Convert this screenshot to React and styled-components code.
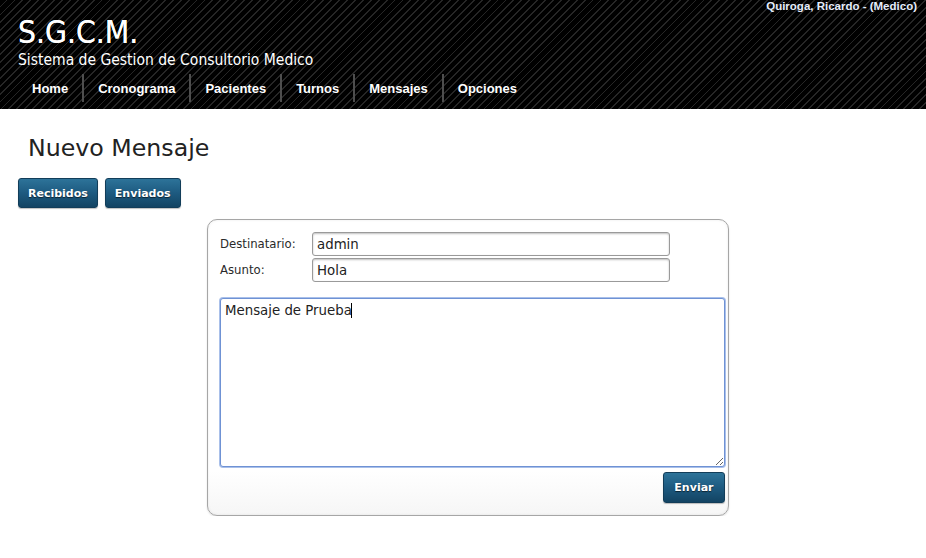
import React from "react";
import styled, { createGlobalStyle } from "styled-components";

const Global = createGlobalStyle`
  html, body { margin: 0; padding: 0; background: #fff; }
  body { font-family: "DejaVu Sans Condensed", "DejaVu Sans", sans-serif; color: #222; }
  * { box-sizing: border-box; }
`;

const Header = styled.header`
  height: 109px;
  background-color: #000;
  background-image: repeating-linear-gradient(
    135deg,
    #000 0px,
    #000 4.3px,
    #262626 4.3px,
    #262626 5.6px
  );
  display: flex;
  flex-direction: column;
  color: #fff;
`;

const UserBar = styled.div`
  height: 12px;
  line-height: 12px;
  text-align: right;
  padding-right: 9px;
  font-family: "Liberation Sans", Arial, sans-serif;
  font-weight: bold;
  font-size: 11.5px;
  color: #e4ecfb;
`;

const Brand = styled.div`
  padding: 2px 0 0 18px;
  display: flex;
  flex-direction: column;
`;

const Title = styled.h1`
  margin: 0;
  font-family: "DejaVu Sans Condensed", "DejaVu Sans", sans-serif;
  font-weight: normal;
  font-size: 31.5px;
  line-height: 36px;
  color: #fff;
  text-shadow: 0 0 0.6px #fff;
`;

const Subtitle = styled.div`
  font-family: "DejaVu Sans Condensed", "DejaVu Sans", sans-serif;
  font-size: 15.5px;
  line-height: 20px;
  color: #fff;
`;

const Nav = styled.nav`
  display: flex;
  padding-left: 18px;
  margin-top: 4px;
  height: 28px;
`;

const NavItem = styled.a`
  display: flex;
  align-items: center;
  padding: 0 14px;
  font-family: "Liberation Sans", Arial, sans-serif;
  font-weight: bold;
  font-size: 13px;
  color: #fff;
  text-decoration: none;
  border-left: ${(p) => (p.$first ? "none" : "2px solid #4e4e4e")};
  cursor: pointer;
`;

const Content = styled.main`
  padding: 0 18px;
`;

const PageTitle = styled.h2`
  margin: 24px 0 0 10px;
  font-family: "DejaVu Sans", Verdana, sans-serif;
  font-weight: normal;
  font-size: 23.7px;
  line-height: 30px;
  color: #222;
`;

const ButtonBar = styled.div`
  display: flex;
  gap: 7px;
  margin-top: 15px;
`;

const BlueButton = styled.button`
  height: ${(p) => p.$h || 30}px;
  padding: 0 ${(p) => p.$px || 10}px;
  border: 1px solid #123d59;
  border-radius: 3px;
  background: linear-gradient(to bottom, #2d7399 0%, #1d5a80 50%, #134463 100%);
  color: #fff;
  font-family: "DejaVu Sans", Verdana, sans-serif;
  font-weight: bold;
  font-size: 11px;
  text-shadow: 0 1px 1px rgba(0, 0, 0, 0.6);
  box-shadow: 0 1px 1px rgba(0, 0, 0, 0.25);
  cursor: pointer;
`;

const Panel = styled.form`
  width: 522px;
  height: 297px;
  margin: 11px 0 0 189px;
  border: 1px solid #a6a6a6;
  border-radius: 10px;
  background: linear-gradient(to bottom, #fff 0%, #fff 85%, #f6f6f6 100%);
  box-shadow: inset 0 0 3px rgba(0, 0, 0, 0.08), 0 1px 2px rgba(0, 0, 0, 0.12);
  padding: 12px 2px 0 12px;
  display: flex;
  flex-direction: column;
`;

const FieldRow = styled.div`
  display: flex;
  align-items: center;
  height: 24px;
  margin-bottom: 2px;
`;

const Label = styled.label`
  width: 92px;
  font-family: "DejaVu Sans Condensed", "DejaVu Sans", sans-serif;
  font-size: 13px;
  color: #2a2a2a;
  margin-top: -1px;
`;

const TextInput = styled.input`
  width: 358px;
  height: 24px;
  border: 1px solid #9a9a9a;
  border-radius: 3px;
  box-shadow: inset 0 1px 2px rgba(0, 0, 0, 0.25);
  padding: 0 4px;
  font-family: "DejaVu Sans", Verdana, sans-serif;
  font-size: 13.33px;
  color: #222;
  outline: none;
  background: #fff;
`;

const AreaWrap = styled.div`
  position: relative;
  width: 505px;
  margin-top: 14px;
`;

const MessageArea = styled.textarea`
  display: block;
  width: 505px;
  height: 169px;
  border: 1px solid #6f92d4;
  box-shadow: 0 0 0 1px #a9c0ea;
  border-radius: 3px;
  padding: 4px 4px;
  font-family: "DejaVu Sans", Verdana, sans-serif;
  font-size: 13.33px;
  line-height: 16px;
  color: #222;
  outline: none;
  resize: both;
`;

const Caret = styled.span`
  position: absolute;
  left: 131px;
  top: 5px;
  width: 1px;
  height: 15px;
  background: #000;
  pointer-events: none;
`;

const Actions = styled.div`
  display: flex;
  justify-content: flex-end;
  width: 505px;
  margin-top: 5px;
`;

export default function App() {
  return (
    <>
      <Global />
      <Header>
        <UserBar>Quiroga, Ricardo - (Medico)</UserBar>
        <Brand>
          <Title>S.G.C.M.</Title>
          <Subtitle>Sistema de Gestion de Consultorio Medico</Subtitle>
        </Brand>
        <Nav>
          {["Home", "Cronograma", "Pacientes", "Turnos", "Mensajes", "Opciones"].map((n, i) => (
            <NavItem key={n} $first={i === 0}>
              {n}
            </NavItem>
          ))}
        </Nav>
      </Header>
      <Content>
        <PageTitle>Nuevo Mensaje</PageTitle>
        <ButtonBar>
          <BlueButton type="button" $px={9}>Recibidos</BlueButton>
          <BlueButton type="button" $px={9}>Enviados</BlueButton>
        </ButtonBar>
        <Panel onSubmit={(e) => e.preventDefault()}>
          <FieldRow>
            <Label>Destinatario:</Label>
            <TextInput defaultValue="admin" />
          </FieldRow>
          <FieldRow>
            <Label>Asunto:</Label>
            <TextInput defaultValue="Hola" />
          </FieldRow>
          <AreaWrap>
            <MessageArea defaultValue="Mensaje de Prueba" />
            <Caret />
          </AreaWrap>
          <Actions>
            <BlueButton type="submit" $h={31} $px={10.5}>Enviar</BlueButton>
          </Actions>
        </Panel>
      </Content>
    </>
  );
}
